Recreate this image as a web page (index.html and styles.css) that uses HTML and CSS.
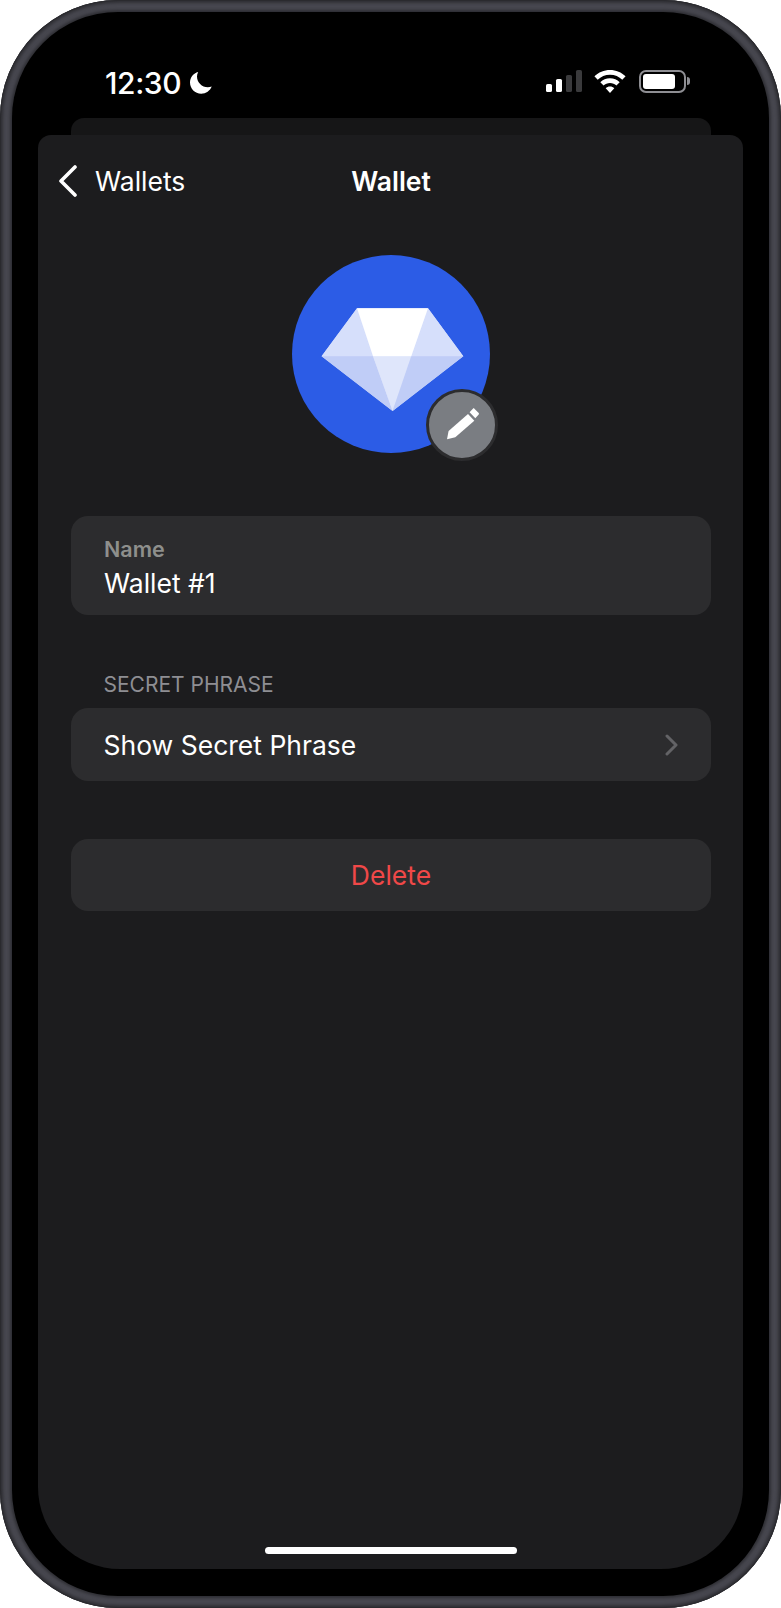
FILE: index.html
```html
<!DOCTYPE html>
<html lang="en">
<head>
<meta charset="utf-8">
<title>Wallet</title>
<link rel="stylesheet" href="styles.css">
</head>
<body>
<div class="phone">
  <div class="screen">
    <header class="status">
      <div class="status-left">
        <span class="time">12:30</span>
        <svg class="moon" width="24" height="24" viewBox="0 0 24 24"><path fill="#fff" d="M9.2 1C4.4 2.2 1 6.5 1 11.6 1 17.8 6 22.8 12.2 22.8c4.8 0 8.9-3 10.5-7.2-1.2.5-2.500.7-3.900.7C12.900 16.300 8 11.400 8 5.500 8 3.900 8.400 2.400 9.200 1z"/></svg>
      </div>
      <div class="status-right">
        <svg class="cell" width="36" height="22" viewBox="0 0 36 22">
          <rect x="0" y="14" width="6" height="8" rx="1.600" fill="#fff"/>
          <rect x="10" y="9" width="6" height="13" rx="1.600" fill="#fff"/>
          <rect x="20" y="5" width="6" height="17" rx="1.600" fill="#3a3a3c"/>
          <rect x="30" y="0" width="6" height="22" rx="1.600" fill="#3a3a3c"/>
        </svg>
        <svg class="wifi" width="32" height="23" viewBox="0 0 32 23">
          <path fill="#fff" d="M16 0c6 0 11.500 2.400 15.600 6.300L28.300 9.800C25.100 6.700 20.800 4.800 16 4.800S6.900 6.700 3.700 9.800L.4 6.300C4.500 2.400 10 0 16 0z"/>
          <path fill="#fff" d="M16 8.300c3.800 0 7.200 1.500 9.700 3.900l-3.300 3.400C20.800 14 18.500 13.100 16 13.100s-4.800.9-6.400 2.500l-3.300-3.400C8.800 9.800 12.200 8.300 16 8.300z"/>
          <path fill="#fff" d="M16 16.600c1.700 0 3.200.6 4.300 1.700L16 23l-4.300-4.700c1.100-1.100 2.600-1.700 4.300-1.700z"/>
        </svg>
        <div class="battery"><span class="battery-fill"></span></div>
        <span class="battery-nub"></span>
      </div>
    </header>
    <div class="sheet-back"></div>
    <main class="sheet">
      <nav class="nav">
        <div class="back">
          <svg width="20" height="32" viewBox="0 0 20 32"><path fill="none" stroke="#fff" stroke-width="3.600" stroke-linecap="round" stroke-linejoin="round" d="M17 2 3 16l14 14"/></svg>
          <span class="back-label">Wallets</span>
        </div>
        <h1 class="title">Wallet</h1>
      </nav>
      <div class="avatar">
        <svg width="198" height="198" viewBox="0 0 198 198">
          <circle cx="99" cy="99" r="99" fill="#2c5ce6"/>
          <polygon points="29.600,101.300 65,53.300 136,53.300 171.300,101.300 100.600,156" fill="#d0dafa"/>
          <polygon points="29.600,101.300 65,53.300 81,101.300" fill="#d6dffb"/>
          <polygon points="136,53.300 171.300,101.300 119.300,101.300" fill="#d6dffb"/>
          <polygon points="29.600,101.300 81,101.300 100.600,156" fill="#c0cdf7"/>
          <polygon points="81,101.300 119.300,101.300 100.600,156" fill="#dfe6fb"/>
          <polygon points="119.300,101.300 171.300,101.300 100.600,156" fill="#c0cdf7"/>
          <polygon points="65,53.300 136,53.300 119.300,101.300 81,101.300" fill="#fff"/>
        </svg>
        <div class="edit-badge">
          <svg width="36" height="36" viewBox="0 0 36 36"><path fill="#fff" d="M3 32.300 4.600 24 24 7 30.300 13.700 11.300 30.300z"/><path fill="#fff" d="M25.600 5.300 28.900 1.700c.4-.5 1.100-.5 1.500 0l4.300 4.300c.4.400.4 1 0 1.500L31.300 11.300z"/></svg>
        </div>
      </div>
      <section class="card card-name">
        <div class="field-label">Name</div>
        <div class="field-value">Wallet #1</div>
      </section>
      <div class="section-label">SECRET PHRASE</div>
      <section class="card card-row">
        <span class="row-label">Show Secret Phrase</span>
        <svg class="chevron" width="14" height="22" viewBox="0 0 14 22"><path fill="none" stroke="#636366" stroke-width="3" stroke-linecap="round" stroke-linejoin="round" d="m2 2 9 9-9 9"/></svg>
      </section>
      <section class="card card-delete">Delete</section>
    </main>
    <div class="home-indicator"></div>
  </div>
</div>
</body>
</html>
```

FILE: styles.css
```css
* { box-sizing: border-box; }
html, body { margin: 0; padding: 0; background: #fff; }
body { font-family: Inter, "Liberation Sans", sans-serif; color: #fff; }

.phone {
  width: 781px;
  height: 1608px;
  padding: 12px;
  border-radius: 118px;
  background: #47474f;
  box-shadow: inset 0 0 0 1px #2a2a2e, inset 0 0 3px 3px #303035;
  overflow: hidden;
}

.screen {
  position: relative;
  height: 100%;
  border-radius: 106px;
  background: #000;
  box-shadow: 0 0 3px 2px #2e2e33;
  display: flex;
  flex-direction: column;
  padding: 0 26px 27px;
}

.status {
  height: 106px;
  flex: none;
  display: flex;
  justify-content: space-between;
  align-items: flex-start;
  padding: 55px 53px 0 67px;
}
.status-left { display: flex; align-items: center; gap: 8px; height: 32px; }
.time { font-size: 30px; font-weight: 500; letter-spacing: -0.4px; line-height: 32px; }
.moon { display: block; }
.status-right { display: flex; align-items: center; height: 24px; padding-top: 4px; }
.cell { display: block; }
.wifi { display: block; margin-left: 12px; }
.battery {
  margin-left: 13px;
  width: 47px;
  height: 23px;
  border: 2px solid #8e8e93;
  border-radius: 7px;
  padding: 2px;
}
.battery-fill { display: block; width: 32px; height: 100%; background: #fff; border-radius: 3px; }
.battery-nub { width: 3px; height: 8px; background: #8e8e93; border-radius: 0 3px 3px 0; margin-left: 1px; }

.sheet-back {
  height: 17px;
  flex: none;
  margin: 0 32px 0 33px;
  background: #161617;
  border-radius: 13px 13px 0 0;
}

.sheet {
  flex: 1;
  background: #1c1c1e;
  border-radius: 13px 13px 82px 82px;
  padding: 0 32px 0 33px;
  display: flex;
  flex-direction: column;
}

.nav {
  position: relative;
  height: 92px;
  flex: none;
  display: flex;
  align-items: center;
  justify-content: center;
}
.back {
  position: absolute;
  left: -13px;
  top: 30px;
  display: flex;
  align-items: center;
  gap: 17px;
  height: 32px;
}
.back svg { display: block; }
.back-label { font-size: 26.500px; line-height: 32px; }
.title { margin: 0; font-size: 26.500px; font-weight: 600; line-height: 32px; padding-top: 0; }

.avatar {
  position: relative;
  width: 198px;
  height: 198px;
  margin: 28px auto 63px;
  flex: none;
}
.avatar > svg { display: block; }
.edit-badge {
  position: absolute;
  left: 134px;
  top: 134px;
  width: 72px;
  height: 72px;
  border-radius: 50%;
  background: #7a7d82;
  border: 3.500px solid #2c2c2e;
  display: flex;
  align-items: center;
  justify-content: center;
}
.edit-badge svg { display: block; }

.card { background: #2c2c2e; border-radius: 17px; }
.card-name { height: 99px; padding: 21px 33px 0; flex: none; }
.field-label { font-size: 21.500px; font-weight: 600; color: #8e8f8c; line-height: 24px; }
.field-value { font-size: 26.500px; line-height: 32px; margin-top: 6px; }
.section-label {
  font-size: 21px;
  color: #8e8e93;
  line-height: 24px;
  padding-left: 32.500px;
  margin: 58px 0 11px;
}
.card-row {
  height: 73px;
  flex: none;
  display: flex;
  align-items: center;
  justify-content: space-between;
  padding: 0 32px 0 32.500px;
}
.row-label { font-size: 26.500px; line-height: 32px; }
.chevron { display: block; }
.card-delete {
  height: 72px;
  flex: none;
  margin-top: 58px;
  display: flex;
  align-items: center;
  justify-content: center;
  font-size: 26.500px;
  color: #f04848;
}

.home-indicator {
  position: absolute;
  left: 252.500px;
  bottom: 42px;
  width: 252px;
  height: 7px;
  border-radius: 4px;
  background: #fff;
}
```
